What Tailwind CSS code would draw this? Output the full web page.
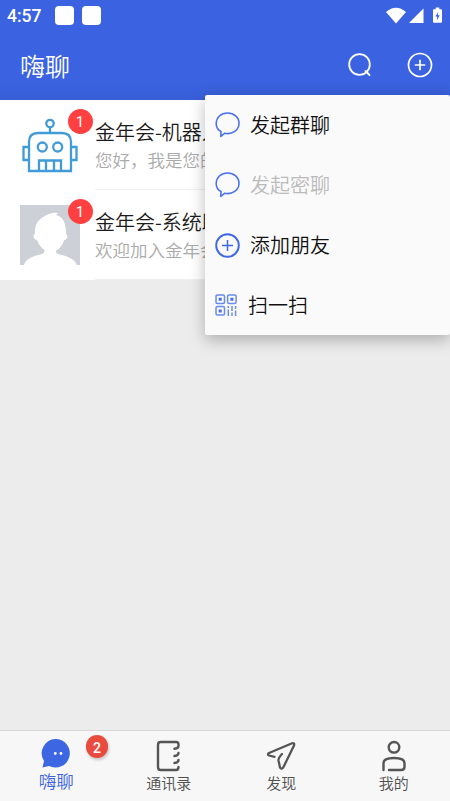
<!DOCTYPE html>
<html lang="zh-CN">
<head>
<meta charset="utf-8">
<meta name="viewport" content="width=device-width, initial-scale=1">
<title>嗨聊</title>
<script src="https://cdn.jsdelivr.net/npm/@tailwindcss/browser@4"></script>
</head>
<body class="bg-[#ececec] font-['Noto_Sans_CJK_SC',sans-serif] font-[350]">
<div class="relative flex h-[801px] w-[450px] flex-col overflow-hidden">
  <header class="h-[100px] shrink-0 bg-[#3a62e0] bg-linear-to-b from-[#3b63e1] from-80% to-[#385ed8] text-white">
    <div class="flex h-[30px] items-center pl-[7px] pr-2">
      <span class="w-12 pt-0.5 font-['Roboto',sans-serif] text-[17.5px] leading-6 font-medium">4:57</span>
      <span class="h-[19px] w-[19px] rounded-[4px] bg-white"></span>
      <span class="ml-2 h-[19px] w-[19px] rounded-[4px] bg-white"></span>
      <svg class="ml-auto h-[17px] w-5" viewBox="0 0 20 17" fill="white"><path d="M0 5Q10-3.500 20 5L10 16.500Z"/></svg>
      <svg class="ml-[3px] h-[15px] w-[15px]" viewBox="0 0 15 15" fill="white"><path d="M14.500.5V15H0Z"/></svg>
      <svg class="ml-[9px] h-[17px] w-[9px]" viewBox="0 0 10 18"><path d="M3 0h4v2h2q1 0 1 1v13q0 1-1 1H1q-1 0-1-1V3q0-1 1-1h2z" fill="white"/><path d="M5.800 5L2.500 10H4.700L4.200 14.500 7.500 8.800H5.300Z" fill="#3b63e1"/></svg>
    </div>
    <div class="flex h-[70px] items-center pl-5 pr-[17px]">
      <h1 class="text-[25px] leading-8 font-[350]">嗨聊</h1>
      <svg class="ml-auto h-[26px] w-[26px]" viewBox="0 0 26 26" fill="none" stroke="white" stroke-width="1.800" stroke-linecap="round"><circle cx="12.500" cy="12.500" r="10.300"/><path d="M18.500 19L22.500 23"/></svg>
      <svg class="ml-[34px] h-[26px] w-[26px]" viewBox="0 0 26 26" fill="none" stroke="white" stroke-width="1.700"><circle cx="13" cy="13" r="11.500"/><path d="M13 7.800v10.400M7.800 13h10.400"/></svg>
    </div>
  </header>

  <main class="flex-1">
    <article class="flex h-[90px] bg-white pl-5">
      <div class="relative mt-[15px] h-[60px] w-[60px]">
        <svg class="h-[60px] w-[60px]" viewBox="0 0 60 60" fill="none" stroke="#419bd9" stroke-width="2.300"><circle cx="30" cy="8.500" r="3.700"/><path d="M30 12v7M9 56V27Q9 18 18 18H42Q51 18 51 27V56ZM9 32H3.500V45H9M51 32h5.500V45H51M19 56V45.500H41V56M26 45.500V56M34 45.500V56"/><circle cx="22.300" cy="32" r="4.500"/><circle cx="37.700" cy="32" r="4.500"/></svg>
        <span class="absolute -top-1.5 left-[47.500px] flex h-[25px] w-[25px] items-center justify-center rounded-full bg-[#ff4040] pt-0.5 font-['Roboto',sans-serif] text-[15px] leading-none font-normal text-white">1</span>
      </div>
      <div class="ml-[15px] flex-1 border-b border-[#f0f0f0] pt-[17px] whitespace-nowrap">
        <h2 class="text-[20px] leading-[30px] font-[350] text-[#1a1a1a]">金年会-机器人</h2>
        <p class="text-[17.500px] leading-[26px] text-[#aaa]">您好，我是您的机器人</p>
      </div>
    </article>
    <article class="flex h-[90px] bg-white pl-5">
      <div class="relative mt-[15px] h-[60px] w-[60px]">
        <svg class="h-[60px] w-[60px]" viewBox="0 0 60 60"><path fill="#cdd1d7" d="M0 0h60v60H0z"/><path fill="white" d="M4 60C6 53 14 51 22 49Q25 48 24.500 45C19 41 18 37 17 35C13.500 35 12 30 15 29C14 16 22 12 29 9Q34 7 38 8L36 10C44 12 46 19 46 29C49 31 47 35 44 35C43 40 40 43 36 46Q35.500 48 38 49C46 51 54 53 57 60Z"/></svg>
        <span class="absolute -top-1.5 left-[47.500px] flex h-[25px] w-[25px] items-center justify-center rounded-full bg-[#ff4040] pt-0.5 font-['Roboto',sans-serif] text-[15px] leading-none font-normal text-white">1</span>
      </div>
      <div class="ml-[15px] flex-1 border-b border-[#f0f0f0] pt-[17px] whitespace-nowrap">
        <h2 class="text-[20px] leading-[30px] font-[350] text-[#1a1a1a]">金年会-系统助手</h2>
        <p class="text-[17.500px] leading-[26px] text-[#aaa]">欢迎加入金年会</p>
      </div>
    </article>
  </main>

  <nav class="grid h-[71px] shrink-0 grid-cols-4 border-t border-[#d8d8d8] bg-[#f7f7f7] text-[15px] text-[#505050]">
    <a class="relative flex flex-col items-center pt-2 text-[#3b63e1]">
      <svg class="h-[30px] w-[30px]" viewBox="0 0 30 30"><path fill="#3d66e3" d="M15.500 0A14.300 14.300 0 1 1 8 27L1.500 28.500 3 22A14.300 14.300 0 0 1 15.500 0Z"/><circle cx="14.300" cy="14.500" r="1.400" fill="white"/><circle cx="20" cy="14.500" r="1.400" fill="white"/></svg>
      <span class="text-[17.500px] leading-6">嗨聊</span>
      <span class="absolute top-1 left-[86px] flex h-[23px] w-[22px] items-center justify-center rounded-full bg-[#e94c3f] pt-0.5 font-['Roboto',sans-serif] text-[14px] leading-none font-medium text-white shadow-[1px_2px_3px_#0003]">2</span>
    </a>
    <a class="flex flex-col items-center pt-[9px]">
      <svg class="h-8 w-[30px]" viewBox="0 0 30 32" fill="none" stroke="#555" stroke-width="2.400" stroke-linecap="round"><path d="M24.500 6V4.500Q24.500 2 22 2H6.500Q4 2 4 5V27Q4 30 6.500 30H22Q24.500 30 24.500 27M24.500 6Q24.500 8.300 20.500 8.800M24.500 13Q24.500 15.500 20.500 16M24.500 20Q24.500 22.500 20.500 23"/></svg>
      <span class="leading-[21px]">通讯录</span>
    </a>
    <a class="flex flex-col items-center pt-[9px]">
      <svg class="h-8 w-[30px]" viewBox="0 0 30 32" fill="none" stroke="#555" stroke-width="2.300" stroke-linecap="round" stroke-linejoin="round"><path d="M8.500 16.800L3 15.500Q1 14.500 3 13L25.500 3.500Q29 2.500 28 5.500L17.500 27Q16 30 14 27.500L12.500 20.500Q12.200 18 16 14"/></svg>
      <span class="leading-[21px]">发现</span>
    </a>
    <a class="flex flex-col items-center pt-[9px]">
      <svg class="h-8 w-[30px]" viewBox="0 0 30 32" fill="none" stroke="#555" stroke-width="2.400" stroke-linecap="round"><circle cx="15" cy="7.300" r="5.300"/><path d="M4.500 30V23Q4.500 18 15 18T25.500 23V27Q25.500 30 22 30H10"/></svg>
      <span class="leading-[21px]">我的</span>
    </a>
  </nav>

  <div class="absolute top-[95px] left-[205px] grid h-[240px] w-[245px] grid-rows-4 rounded-[2px] bg-[#fafafa] text-[20px] text-[#111] shadow-[0_5px_16px_#0004]">
    <div class="flex items-center pl-2.5">
      <svg class="mr-[10px] h-[26px] w-[25px]" viewBox="0 0 25 26" fill="none" stroke="#4c73ea" stroke-width="1.600" stroke-linejoin="round"><path d="M6 19.500L5.800 24.500 9.500 21.300C17.500 23 24 18 24 11.200C24 5 19 1 12.500 1C6 1 1.200 5.500 1.200 11.500C1.200 15 3 18 6 19.500Z"/></svg>
      <span>发起群聊</span>
    </div>
    <div class="flex items-center pl-2.5">
      <svg class="mr-[10px] h-[26px] w-[25px]" viewBox="0 0 25 26" fill="none" stroke="#4c73ea" stroke-width="1.600" stroke-linejoin="round"><path d="M6 19.500L5.800 24.500 9.500 21.300C17.500 23 24 18 24 11.200C24 5 19 1 12.500 1C6 1 1.200 5.500 1.200 11.500C1.200 15 3 18 6 19.500Z"/></svg>
      <span class="text-[#bbb]">发起密聊</span>
    </div>
    <div class="flex items-center pl-2.5">
      <svg class="mr-[10px] h-[25px] w-[25px]" viewBox="0 0 25 25" fill="none" stroke="#3f68e6" stroke-width="1.900"><circle cx="12.500" cy="12.500" r="11.300"/><path stroke-width="1.500" d="M12.500 7v11M7 12.500h11"/></svg>
      <span>添加朋友</span>
    </div>
    <div class="flex items-center pl-2.5">
      <svg class="mr-[11px] h-[22px] w-[22px]" viewBox="0 0 22 22" fill="none" stroke="#6a8aee" stroke-width="1.500"><rect x="1" y=".9" width="8.500" height="8.500" rx="1.500"/><rect x="12.600" y=".9" width="8.500" height="8.500" rx="1.500"/><rect x="1" y="12.600" width="8.500" height="8.500" rx="1.500"/><path fill="#4770e8" stroke="none" d="M3.700 3.700h3v3h-3zM15.400 3.700h3v3h-3zM3.700 15.400h3v3h-3z"/><path d="M13.300 12v2M13.300 15.500V22M17 12v5M17 18.500V22M20.600 12v3M20.600 16.500V22"/></svg>
      <span>扫一扫</span>
    </div>
  </div>
</div>
</body>
</html>
